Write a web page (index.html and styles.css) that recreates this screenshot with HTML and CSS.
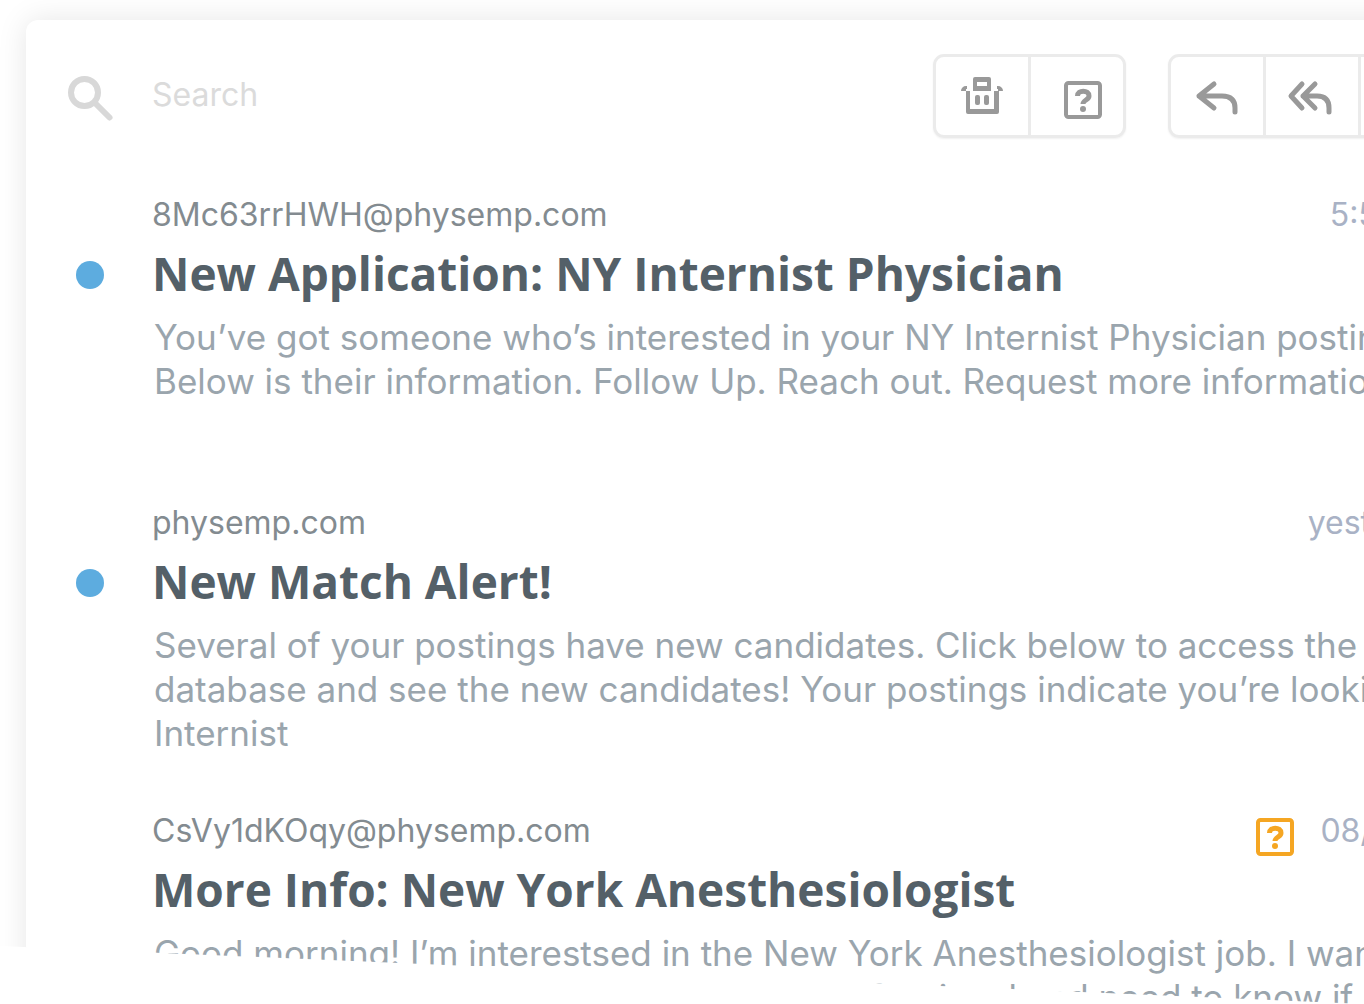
FILE: index.html
```html
<!DOCTYPE html>
<html lang="en">
  <head>
    <meta charset="UTF-8" />
    <meta name="viewport" content="width=device-width, initial-scale=1.0" />
    <title>Inbox</title>
    <link rel="stylesheet" href="styles.css">
  </head>
  <body>
    <div class="stage">
      <main class="inbox">
        <div class="toolbar">
          <label class="search">
            <svg class="search-icon" viewBox="0 0 46 46" aria-hidden="true">
              <circle cx="16.500" cy="16.500" r="13.500" />
              <path d="M27 27 L41.500 41.500" />
            </svg>
            <input class="search-input" type="search" placeholder="Search" aria-label="Search" />
          </label>
          <div class="button-group">
            <button class="button" aria-label="Delete">
              <svg class="icon" viewBox="0 0 42 42" fill="currentColor" aria-hidden="true">
                <path fill-rule="evenodd" d="M14 2h14a2 2 0 0 1 2 2v12H12V4a2 2 0 0 1 2-2zM16 7v4h10V7z" />
                <path d="M5 16h4v18h24V16h5v21a2 2 0 0 1-2 2H7a2 2 0 0 1-2-2z" />
                <path d="M0 16a5 5 0 0 1 5-5h1v3H5v2zM42 16a5 5 0 0 0-5-5h-1v3h1v2z" />
                <rect x="14" y="20" width="5" height="10" rx="2" />
                <rect x="23" y="20" width="5" height="10" rx="2" />
              </svg>
            </button>
            <button class="button button-flag" aria-label="Mark as question">
              <svg class="icon" viewBox="0 0 42 42" aria-hidden="true">
                <rect class="line" x="4" y="4" width="34" height="34" rx="2.500" />
                <path class="line mark" d="M15.500 17c0-6.500 11.500-6.500 11.500 0 0 4-6 4-6 8" />
                <circle cx="21" cy="30" r="3" fill="currentColor" />
              </svg>
            </button>
          </div>
          <div class="button-group">
            <button class="button" aria-label="Reply">
              <svg class="icon" viewBox="0 0 42 42" aria-hidden="true">
                <path class="line thick" d="M18 9 3 21l15 12M3 21h23q13 0 13 12v4" />
              </svg>
            </button>
            <button class="button" aria-label="Reply all">
              <svg class="icon" viewBox="0 0 42 42" aria-hidden="true">
                <path class="line thick" d="M11 9 0 21l11 12M24 9 12 21l12 12M12 21h14q12 0 12 12v4" />
              </svg>
            </button>
            <button class="button" aria-label="Forward">
              <svg class="icon" viewBox="0 0 42 42" aria-hidden="true">
                <path class="line thick" d="M24 9 39 21 24 33M39 21H16Q3 21 3 33v4" />
              </svg>
            </button>
          </div>
        </div>

        <article class="message unread">
          <div class="message-meta">
            <span class="sender">8Mc63rrHWH@physemp.com</span>
            <time class="time">5:56 PM</time>
          </div>
          <h2 class="subject">New Application: NY Internist Physician</h2>
          <p class="preview">You’ve got someone who’s interested in your NY Internist Physician posting.<br>Below is their information. Follow Up. Reach out. Request more information.</p>
        </article>

        <article class="message unread">
          <div class="message-meta">
            <span class="sender">physemp.com</span>
            <time class="time">yesterday</time>
          </div>
          <h2 class="subject">New Match Alert!</h2>
          <p class="preview">Several of your postings have new candidates. Click below to access the<br>database and see the new candidates! Your postings indicate you’re looking<br>Internist</p>
        </article>

        <article class="message">
          <div class="message-meta">
            <span class="sender">CsVy1dKOqy@physemp.com</span>
            <svg class="flag" viewBox="0 0 42 42" role="img" aria-label="Question">
              <rect class="line" x="4" y="4" width="34" height="34" rx="2.500" />
              <path class="line mark" d="M15.500 17c0-6.500 11.500-6.500 11.500 0 0 4-6 4-6 8" />
              <circle cx="21" cy="30" r="3" fill="currentColor" />
            </svg>
            <time class="time">08/24/16</time>
          </div>
          <h2 class="subject">More Info: New York Anesthesiologist</h2>
          <p class="preview">Good morning! I’m interestsed in the New York Anesthesiologist job. I want<br>to speak with someone today, as I am a professional and need to know if</p>
        </article>
      </main>
    </div>
  </body>
</html>
```
FILE: styles.css
```css
* {
  box-sizing: border-box;
}

body {
  margin: 0;
  background: #fff;
  font-family: Inter, "Liberation Sans", sans-serif;
}

/* slanted bottom edge, the inbox runs off to the right */
.stage {
  height: 100vh;
  overflow: hidden;
  padding: 20px 0 0 26px;
  clip-path: polygon(0 0, 100% 0, 100% 100%, 0 calc(100% - 58px));
}

.inbox {
  margin-right: -134px;
  padding: 34px 42px 0;
  min-height: 100vh;
  background: #fff;
  border-radius: 12px;
  box-shadow: 0 0 30px rgba(0, 0, 0, 0.1);
}

.toolbar {
  display: flex;
  align-items: center;
  gap: 42px;
  margin-bottom: 56px;
}

.search {
  flex: 1;
  min-width: 0;
  display: flex;
  align-items: center;
  gap: 38px;
}

.search-icon {
  flex: none;
  width: 46px;
  height: 46px;
  margin-top: 6px;
  fill: none;
  stroke: #d8d8d8;
  stroke-width: 6;
  stroke-linecap: round;
}

.search-input {
  flex: 1;
  min-width: 0;
  padding: 0 0 2px;
  border: 0;
  outline: 0;
  background: none;
  color: #838b90;
  font: 32px/44px Inter, "Liberation Sans", sans-serif;
}

.search-input::placeholder {
  color: #dbdbdb;
}

.button-group {
  display: flex;
  height: 84px;
  border: 3px solid #ebebeb;
  border-radius: 11px;
  box-shadow: 0 1px 2px rgba(0, 0, 0, 0.06);
}

.button {
  display: flex;
  align-items: center;
  justify-content: center;
  width: 92px;
  padding: 0;
  border: 0;
  background: none;
  color: #999;
  cursor: pointer;
}

.button + .button {
  width: 95px;
  border-left: 3px solid #ebebeb;
}

.button-flag {
  padding: 8px 0 0 12px;
}

.icon {
  width: 42px;
  height: 42px;
  overflow: visible;
}

.line {
  fill: none;
  stroke: currentColor;
  stroke-width: 4;
  stroke-linejoin: round;
}

.mark {
  stroke-width: 5;
}

.thick {
  stroke-width: 5;
  stroke-linecap: round;
}

.message {
  position: relative;
  min-height: 308px;
  padding-left: 84px;
  white-space: nowrap;
}

.unread::before {
  content: "";
  position: absolute;
  top: 67px;
  left: 8px;
  width: 28px;
  height: 28px;
  border-radius: 50%;
  background: #5dacdf;
}

.message-meta {
  display: flex;
  align-items: center;
  height: 42px;
  font-size: 32px;
  line-height: 42px;
}

.sender {
  flex: 1;
  color: #838b90;
}

.flag {
  width: 42px;
  height: 42px;
  margin: 12px 24px 0 0;
  color: #f5a623;
}

.time {
  color: #a9b2c5;
}

.subject {
  margin: 9px 0 14px;
  color: #546068;
  font: 700 46px/56px "Open Sans", "Noto Sans", sans-serif;
}

.preview {
  margin: 0;
  padding-left: 2px;
  color: #9aa5ad;
  font-size: 35px;
  line-height: 44px;
}
```
